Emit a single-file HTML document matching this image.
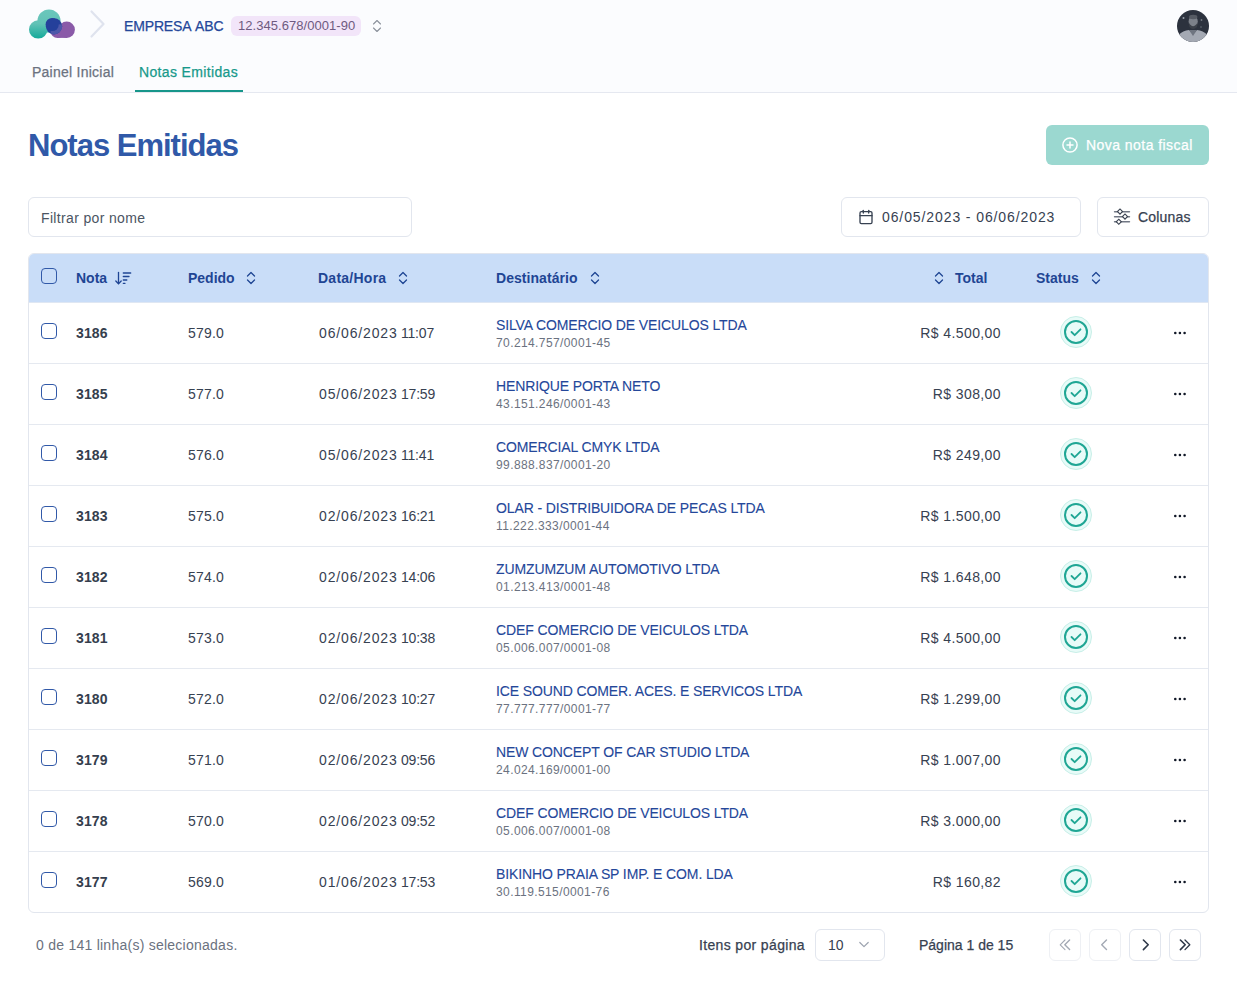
<!DOCTYPE html>
<html><head><meta charset="utf-8">
<style>
*{box-sizing:border-box;margin:0;padding:0}
html,body{width:1237px;height:985px;overflow:hidden;background:#fff;font-family:"Liberation Sans",sans-serif;color:#374151}
.a{position:absolute;white-space:nowrap}
#hdr{position:absolute;left:0;top:0;width:1237px;height:93px;background:#fbfcfe;border-bottom:1px solid #e5e8f0}
svg{position:absolute;overflow:visible}
.btn{position:absolute;border:1px solid #e2e6ee;border-radius:6px;background:#fff}
#tbl{position:absolute;left:28px;top:253px;width:1181px;height:660px;border:1px solid #e2e6ee;border-radius:6px;overflow:hidden}
#th{position:absolute;left:0;top:0;width:1179px;height:49px;background:#c9ddf8;border-bottom:1px solid #dfe7f3}
.row{position:absolute;left:0;width:1179px;height:61px;border-bottom:1px solid #e5e9f0}
</style></head><body>
<div id="hdr"></div>
<svg style="left:0;top:0" width="100" height="50">
<defs>
<linearGradient id="tg" gradientUnits="userSpaceOnUse" x1="0" y1="12" x2="0" y2="38"><stop offset="0" stop-color="#69c6bb"/><stop offset="0.45" stop-color="#62c2b6"/><stop offset="1" stop-color="#17ab9b"/></linearGradient>
<clipPath id="navyc"><circle cx="54" cy="26.3" r="8.1"/></clipPath>
</defs>
<g fill="url(#tg)"><circle cx="49" cy="21" r="11.5"/><circle cx="38.2" cy="29.4" r="9.2"/></g>
<g fill="#8a5aa8"><circle cx="66.7" cy="29.8" r="8.2"/><circle cx="57.5" cy="31" r="7"/><rect x="57" y="30" width="10" height="7.9"/></g>
<circle cx="54" cy="26.3" r="8.1" fill="#25409b"/>
<g clip-path="url(#navyc)" fill="#4d58aa"><circle cx="66.7" cy="29.8" r="8.2"/><circle cx="57.5" cy="31" r="7"/></g>
<circle cx="54" cy="26.3" r="6.6" fill="#25409b" transform="translate(-1.8,-1.8)"/>
</svg>
<svg style="left:0;top:0" width="120" height="50"><polyline points="91.5,11.5 103.5,24 91.5,36.5" fill="none" stroke="#dfe3ee" stroke-width="2.2" stroke-linecap="round" stroke-linejoin="round"/></svg>
<div class="a" style="left:124px;top:19px;font-size:14px;line-height:14px;font-weight:400;color:#24479a;letter-spacing:-0.15px;-webkit-text-stroke:0.25px currentColor;word-spacing:1.5px;">EMPRESA ABC</div>
<div class="a" style="left:231px;top:16px;width:130px;height:20px;border-radius:6px;background:#f2e5f9"></div>
<div class="a" style="left:238px;top:19px;font-size:13px;line-height:13px;font-weight:400;color:#6e5a80;letter-spacing:0.05px;">12.345.678/0001-90</div>
<svg style="left:0;top:0" width="1237" height="985"><g fill="none" stroke="#8b919c" stroke-width="1.1" stroke-linecap="round" stroke-linejoin="round"><polyline points="373.5,24 377,20.5 380.5,24"/><polyline points="373.5,28 377,31.5 380.5,28"/></g></svg>
<svg style="left:1177px;top:10px" width="32" height="32"><defs><clipPath id="av"><circle cx="16" cy="16" r="16"/></clipPath></defs>
<g clip-path="url(#av)"><rect width="32" height="32" fill="#2c323e"/>
<path d="M0 32 L1.5 25 Q6 20.5 12 20 L16 24 L20 20 Q26 20.5 30.5 25 L32 32 Z" fill="#a4a9b3"/>
<path d="M12 20 L16 26 L20 20 Z" fill="#6f7580"/>
<ellipse cx="16.2" cy="11.5" rx="4.6" ry="5.6" fill="#7b8089"/>
<path d="M11.8 12.5 Q16 20 20.6 12.5 L20 17 Q16 21 12.4 17 Z" fill="#3b4049"/>
<ellipse cx="16.2" cy="7" rx="4.2" ry="2.2" fill="#565b64"/>
<circle cx="6.5" cy="8" r="1" fill="#9aa0aa"/><circle cx="24.5" cy="10" r="0.9" fill="#747a84"/><circle cx="24" cy="17" r="0.8" fill="#6a707a"/>
</g></svg>
<div class="a" style="left:32px;top:65px;font-size:14px;line-height:14px;font-weight:400;color:#6b7280;letter-spacing:0.25px;-webkit-text-stroke:0.25px currentColor;">Painel Inicial</div>
<div class="a" style="left:139px;top:65px;font-size:14px;line-height:14px;font-weight:400;color:#17998b;letter-spacing:0.35px;-webkit-text-stroke:0.25px currentColor;">Notas Emitidas</div>
<div class="a" style="left:135px;top:90px;width:108px;height:2px;background:#17968a"></div>
<div class="a" style="left:28px;top:130px;font-size:31px;line-height:31px;font-weight:700;color:#3059a8;letter-spacing:-1px;">Notas Emitidas</div>
<div class="a" style="left:1046px;top:125px;width:163px;height:40px;border-radius:6px;background:#9bd8d0"></div>
<svg style="left:0;top:0" width="1237" height="300"><g fill="none" stroke="#fff" stroke-width="1.5" stroke-linecap="round"><circle cx="1070" cy="145" r="7.1"/><line x1="1070" y1="142" x2="1070" y2="148"/><line x1="1067" y1="145" x2="1073" y2="145"/></g></svg>
<div class="a" style="left:1086px;top:138px;font-size:14px;line-height:14px;font-weight:400;color:#ffffff;letter-spacing:0.45px;-webkit-text-stroke:0.25px currentColor;">Nova nota fiscal</div>
<div class="btn" style="left:28px;top:197px;width:384px;height:40px"></div>
<div class="a" style="left:41px;top:211px;font-size:14px;line-height:14px;font-weight:400;color:#4b5563;letter-spacing:0.35px;">Filtrar por nome</div>
<div class="btn" style="left:841px;top:197px;width:240px;height:40px"></div>
<svg style="left:858px;top:209px" width="16" height="16" viewBox="0 0 24 24"><g fill="none" stroke="#374151" stroke-width="2" stroke-linecap="round" stroke-linejoin="round"><rect x="3" y="4" width="18" height="18" rx="2"/><line x1="16" y1="2" x2="16" y2="6"/><line x1="8" y1="2" x2="8" y2="6"/><line x1="3" y1="10" x2="21" y2="10"/></g></svg>
<div class="a" style="left:882px;top:210px;font-size:14px;line-height:14px;font-weight:400;color:#374151;letter-spacing:0.9px;">06/05/2023 - 06/06/2023</div>
<div class="btn" style="left:1097px;top:197px;width:112px;height:40px"></div>
<svg style="left:0;top:0" width="1237" height="300"><g stroke="#717784" stroke-width="1.4" stroke-linecap="round"><line x1="1114.5" y1="211.8" x2="1129.5" y2="211.8"/><line x1="1114.5" y1="216.8" x2="1129.5" y2="216.8"/><line x1="1114.5" y1="221.8" x2="1129.5" y2="221.8"/></g><g fill="#fff" stroke="#3a4250" stroke-width="1.1"><rect x="-1.8" y="-1.8" width="3.6" height="3.6" transform="translate(1120,211.6) rotate(45)"/><rect x="-1.8" y="-1.8" width="3.6" height="3.6" transform="translate(1125,216.6) rotate(45)"/><rect x="-1.8" y="-1.8" width="3.6" height="3.6" transform="translate(1118.8,221.8) rotate(45)"/></g></svg>
<div class="a" style="left:1138px;top:210px;font-size:14px;line-height:14px;font-weight:400;color:#374151;letter-spacing:0.2px;-webkit-text-stroke:0.25px currentColor;">Colunas</div>
<div id="tbl"><div id="th"></div>
<div class="row" style="top:49px;"></div>
<div class="row" style="top:110px;"></div>
<div class="row" style="top:171px;"></div>
<div class="row" style="top:232px;"></div>
<div class="row" style="top:293px;"></div>
<div class="row" style="top:354px;"></div>
<div class="row" style="top:415px;"></div>
<div class="row" style="top:476px;"></div>
<div class="row" style="top:537px;"></div>
<div class="row" style="top:598px;border-bottom:none;"></div>
</div>
<div class="a" style="left:41px;top:268px;width:16px;height:16px;border:1.3px solid #3159a8;border-radius:4px"></div>
<div class="a" style="left:76px;top:271px;font-size:14px;line-height:14px;font-weight:700;color:#1f4594;">Nota</div>
<svg style="left:0;top:0" width="1237" height="400"><g fill="none" stroke="#1f4594" stroke-width="1.3" stroke-linecap="round" stroke-linejoin="round"><line x1="118.5" y1="272.5" x2="118.5" y2="283.5"/><polyline points="115.8,281 118.5,283.7 121.2,281"/><line x1="123.3" y1="273" x2="130.7" y2="273"/><line x1="123.3" y1="276.5" x2="129" y2="276.5"/><line x1="123.3" y1="280" x2="126.8" y2="280"/><line x1="123.3" y1="283.3" x2="125" y2="283.3"/></g></svg>
<div class="a" style="left:188px;top:271px;font-size:14px;line-height:14px;font-weight:700;color:#1f4594;">Pedido</div>
<svg style="left:0;top:0" width="1237" height="985"><g fill="none" stroke="#1f4594" stroke-width="1.3" stroke-linecap="round" stroke-linejoin="round"><polyline points="247.5,276 251,272.5 254.5,276"/><polyline points="247.5,280 251,283.5 254.5,280"/></g></svg>
<div class="a" style="left:318px;top:271px;font-size:14px;line-height:14px;font-weight:700;color:#1f4594;letter-spacing:0.25px;">Data/Hora</div>
<svg style="left:0;top:0" width="1237" height="985"><g fill="none" stroke="#1f4594" stroke-width="1.3" stroke-linecap="round" stroke-linejoin="round"><polyline points="399.5,276 403,272.5 406.5,276"/><polyline points="399.5,280 403,283.5 406.5,280"/></g></svg>
<div class="a" style="left:496px;top:271px;font-size:14px;line-height:14px;font-weight:700;color:#1f4594;letter-spacing:0.05px;">Destinatário</div>
<svg style="left:0;top:0" width="1237" height="985"><g fill="none" stroke="#1f4594" stroke-width="1.3" stroke-linecap="round" stroke-linejoin="round"><polyline points="591.5,276 595,272.5 598.5,276"/><polyline points="591.5,280 595,283.5 598.5,280"/></g></svg>
<svg style="left:0;top:0" width="1237" height="985"><g fill="none" stroke="#1f4594" stroke-width="1.3" stroke-linecap="round" stroke-linejoin="round"><polyline points="935.5,276 939,272.5 942.5,276"/><polyline points="935.5,280 939,283.5 942.5,280"/></g></svg>
<div class="a" style="left:955px;top:271px;font-size:14px;line-height:14px;font-weight:700;color:#1f4594;">Total</div>
<div class="a" style="left:1036px;top:271px;font-size:14px;line-height:14px;font-weight:700;color:#1f4594;">Status</div>
<svg style="left:0;top:0" width="1237" height="985"><g fill="none" stroke="#1f4594" stroke-width="1.3" stroke-linecap="round" stroke-linejoin="round"><polyline points="1092.5,276 1096,272.5 1099.5,276"/><polyline points="1092.5,280 1096,283.5 1099.5,280"/></g></svg>
<div class="a" style="left:41px;top:323px;width:16px;height:16px;border:1.3px solid #3159a8;border-radius:4px"></div>
<div class="a" style="left:76px;top:326px;font-size:14px;line-height:14px;font-weight:700;color:#353e4d;letter-spacing:0.15px;">3186</div>
<div class="a" style="left:188px;top:326px;font-size:14px;line-height:14px;font-weight:400;color:#374151;letter-spacing:0.2px;">579.0</div>
<div class="a" style="left:319px;top:326px;font-size:14px;line-height:14px;font-weight:400;color:#374151;word-spacing:-0.3px;"><span style="letter-spacing:0.85px">06/06/2023</span><span style="letter-spacing:-0.2px"> 11:07</span></div>
<div class="a" style="left:496px;top:318px;font-size:14px;line-height:14px;font-weight:400;color:#24479a;letter-spacing:-0.12px;-webkit-text-stroke:0.1px currentColor;">SILVA COMERCIO DE VEICULOS LTDA</div>
<div class="a" style="left:496px;top:337px;font-size:12px;line-height:12px;font-weight:400;color:#6b7280;letter-spacing:0.4px;">70.214.757/0001-45</div>
<div class="a" style="right:236px;top:326px;font-size:14px;line-height:14px;font-weight:400;color:#374151;letter-spacing:0.4px;">R$ 4.500,00</div>
<svg style="left:1060px;top:316px" width="32" height="32"><circle cx="16" cy="16" r="15.5" fill="#e8fbf8" stroke="#c8efe8" stroke-width="1"/><circle cx="16" cy="16" r="11" fill="none" stroke="#1fa694" stroke-width="2"/><polyline points="11.5,16 14.7,19.2 20.5,13.3" fill="none" stroke="#1fa694" stroke-width="1.8" stroke-linecap="round" stroke-linejoin="round"/></svg>
<svg style="left:1170px;top:329px" width="20" height="12"><g fill="#111827"><circle cx="5.3" cy="4" r="1.3"/><circle cx="9.9" cy="4" r="1.3"/><circle cx="14.6" cy="4" r="1.3"/></g></svg>
<div class="a" style="left:41px;top:384px;width:16px;height:16px;border:1.3px solid #3159a8;border-radius:4px"></div>
<div class="a" style="left:76px;top:387px;font-size:14px;line-height:14px;font-weight:700;color:#353e4d;letter-spacing:0.15px;">3185</div>
<div class="a" style="left:188px;top:387px;font-size:14px;line-height:14px;font-weight:400;color:#374151;letter-spacing:0.2px;">577.0</div>
<div class="a" style="left:319px;top:387px;font-size:14px;line-height:14px;font-weight:400;color:#374151;word-spacing:-0.3px;"><span style="letter-spacing:0.85px">05/06/2023</span><span style="letter-spacing:-0.2px"> 17:59</span></div>
<div class="a" style="left:496px;top:379px;font-size:14px;line-height:14px;font-weight:400;color:#24479a;letter-spacing:-0.12px;-webkit-text-stroke:0.1px currentColor;">HENRIQUE PORTA NETO</div>
<div class="a" style="left:496px;top:398px;font-size:12px;line-height:12px;font-weight:400;color:#6b7280;letter-spacing:0.4px;">43.151.246/0001-43</div>
<div class="a" style="right:236px;top:387px;font-size:14px;line-height:14px;font-weight:400;color:#374151;letter-spacing:0.4px;">R$ 308,00</div>
<svg style="left:1060px;top:377px" width="32" height="32"><circle cx="16" cy="16" r="15.5" fill="#e8fbf8" stroke="#c8efe8" stroke-width="1"/><circle cx="16" cy="16" r="11" fill="none" stroke="#1fa694" stroke-width="2"/><polyline points="11.5,16 14.7,19.2 20.5,13.3" fill="none" stroke="#1fa694" stroke-width="1.8" stroke-linecap="round" stroke-linejoin="round"/></svg>
<svg style="left:1170px;top:390px" width="20" height="12"><g fill="#111827"><circle cx="5.3" cy="4" r="1.3"/><circle cx="9.9" cy="4" r="1.3"/><circle cx="14.6" cy="4" r="1.3"/></g></svg>
<div class="a" style="left:41px;top:445px;width:16px;height:16px;border:1.3px solid #3159a8;border-radius:4px"></div>
<div class="a" style="left:76px;top:448px;font-size:14px;line-height:14px;font-weight:700;color:#353e4d;letter-spacing:0.15px;">3184</div>
<div class="a" style="left:188px;top:448px;font-size:14px;line-height:14px;font-weight:400;color:#374151;letter-spacing:0.2px;">576.0</div>
<div class="a" style="left:319px;top:448px;font-size:14px;line-height:14px;font-weight:400;color:#374151;word-spacing:-0.3px;"><span style="letter-spacing:0.85px">05/06/2023</span><span style="letter-spacing:-0.2px"> 11:41</span></div>
<div class="a" style="left:496px;top:440px;font-size:14px;line-height:14px;font-weight:400;color:#24479a;letter-spacing:-0.12px;-webkit-text-stroke:0.1px currentColor;">COMERCIAL CMYK LTDA</div>
<div class="a" style="left:496px;top:459px;font-size:12px;line-height:12px;font-weight:400;color:#6b7280;letter-spacing:0.4px;">99.888.837/0001-20</div>
<div class="a" style="right:236px;top:448px;font-size:14px;line-height:14px;font-weight:400;color:#374151;letter-spacing:0.4px;">R$ 249,00</div>
<svg style="left:1060px;top:438px" width="32" height="32"><circle cx="16" cy="16" r="15.5" fill="#e8fbf8" stroke="#c8efe8" stroke-width="1"/><circle cx="16" cy="16" r="11" fill="none" stroke="#1fa694" stroke-width="2"/><polyline points="11.5,16 14.7,19.2 20.5,13.3" fill="none" stroke="#1fa694" stroke-width="1.8" stroke-linecap="round" stroke-linejoin="round"/></svg>
<svg style="left:1170px;top:451px" width="20" height="12"><g fill="#111827"><circle cx="5.3" cy="4" r="1.3"/><circle cx="9.9" cy="4" r="1.3"/><circle cx="14.6" cy="4" r="1.3"/></g></svg>
<div class="a" style="left:41px;top:506px;width:16px;height:16px;border:1.3px solid #3159a8;border-radius:4px"></div>
<div class="a" style="left:76px;top:509px;font-size:14px;line-height:14px;font-weight:700;color:#353e4d;letter-spacing:0.15px;">3183</div>
<div class="a" style="left:188px;top:509px;font-size:14px;line-height:14px;font-weight:400;color:#374151;letter-spacing:0.2px;">575.0</div>
<div class="a" style="left:319px;top:509px;font-size:14px;line-height:14px;font-weight:400;color:#374151;word-spacing:-0.3px;"><span style="letter-spacing:0.85px">02/06/2023</span><span style="letter-spacing:-0.2px"> 16:21</span></div>
<div class="a" style="left:496px;top:501px;font-size:14px;line-height:14px;font-weight:400;color:#24479a;letter-spacing:-0.12px;-webkit-text-stroke:0.1px currentColor;">OLAR - DISTRIBUIDORA DE PECAS LTDA</div>
<div class="a" style="left:496px;top:520px;font-size:12px;line-height:12px;font-weight:400;color:#6b7280;letter-spacing:0.4px;">11.222.333/0001-44</div>
<div class="a" style="right:236px;top:509px;font-size:14px;line-height:14px;font-weight:400;color:#374151;letter-spacing:0.4px;">R$ 1.500,00</div>
<svg style="left:1060px;top:499px" width="32" height="32"><circle cx="16" cy="16" r="15.5" fill="#e8fbf8" stroke="#c8efe8" stroke-width="1"/><circle cx="16" cy="16" r="11" fill="none" stroke="#1fa694" stroke-width="2"/><polyline points="11.5,16 14.7,19.2 20.5,13.3" fill="none" stroke="#1fa694" stroke-width="1.8" stroke-linecap="round" stroke-linejoin="round"/></svg>
<svg style="left:1170px;top:512px" width="20" height="12"><g fill="#111827"><circle cx="5.3" cy="4" r="1.3"/><circle cx="9.9" cy="4" r="1.3"/><circle cx="14.6" cy="4" r="1.3"/></g></svg>
<div class="a" style="left:41px;top:567px;width:16px;height:16px;border:1.3px solid #3159a8;border-radius:4px"></div>
<div class="a" style="left:76px;top:570px;font-size:14px;line-height:14px;font-weight:700;color:#353e4d;letter-spacing:0.15px;">3182</div>
<div class="a" style="left:188px;top:570px;font-size:14px;line-height:14px;font-weight:400;color:#374151;letter-spacing:0.2px;">574.0</div>
<div class="a" style="left:319px;top:570px;font-size:14px;line-height:14px;font-weight:400;color:#374151;word-spacing:-0.3px;"><span style="letter-spacing:0.85px">02/06/2023</span><span style="letter-spacing:-0.2px"> 14:06</span></div>
<div class="a" style="left:496px;top:562px;font-size:14px;line-height:14px;font-weight:400;color:#24479a;letter-spacing:-0.12px;-webkit-text-stroke:0.1px currentColor;">ZUMZUMZUM AUTOMOTIVO LTDA</div>
<div class="a" style="left:496px;top:581px;font-size:12px;line-height:12px;font-weight:400;color:#6b7280;letter-spacing:0.4px;">01.213.413/0001-48</div>
<div class="a" style="right:236px;top:570px;font-size:14px;line-height:14px;font-weight:400;color:#374151;letter-spacing:0.4px;">R$ 1.648,00</div>
<svg style="left:1060px;top:560px" width="32" height="32"><circle cx="16" cy="16" r="15.5" fill="#e8fbf8" stroke="#c8efe8" stroke-width="1"/><circle cx="16" cy="16" r="11" fill="none" stroke="#1fa694" stroke-width="2"/><polyline points="11.5,16 14.7,19.2 20.5,13.3" fill="none" stroke="#1fa694" stroke-width="1.8" stroke-linecap="round" stroke-linejoin="round"/></svg>
<svg style="left:1170px;top:573px" width="20" height="12"><g fill="#111827"><circle cx="5.3" cy="4" r="1.3"/><circle cx="9.9" cy="4" r="1.3"/><circle cx="14.6" cy="4" r="1.3"/></g></svg>
<div class="a" style="left:41px;top:628px;width:16px;height:16px;border:1.3px solid #3159a8;border-radius:4px"></div>
<div class="a" style="left:76px;top:631px;font-size:14px;line-height:14px;font-weight:700;color:#353e4d;letter-spacing:0.15px;">3181</div>
<div class="a" style="left:188px;top:631px;font-size:14px;line-height:14px;font-weight:400;color:#374151;letter-spacing:0.2px;">573.0</div>
<div class="a" style="left:319px;top:631px;font-size:14px;line-height:14px;font-weight:400;color:#374151;word-spacing:-0.3px;"><span style="letter-spacing:0.85px">02/06/2023</span><span style="letter-spacing:-0.2px"> 10:38</span></div>
<div class="a" style="left:496px;top:623px;font-size:14px;line-height:14px;font-weight:400;color:#24479a;letter-spacing:-0.12px;-webkit-text-stroke:0.1px currentColor;">CDEF COMERCIO DE VEICULOS LTDA</div>
<div class="a" style="left:496px;top:642px;font-size:12px;line-height:12px;font-weight:400;color:#6b7280;letter-spacing:0.4px;">05.006.007/0001-08</div>
<div class="a" style="right:236px;top:631px;font-size:14px;line-height:14px;font-weight:400;color:#374151;letter-spacing:0.4px;">R$ 4.500,00</div>
<svg style="left:1060px;top:621px" width="32" height="32"><circle cx="16" cy="16" r="15.5" fill="#e8fbf8" stroke="#c8efe8" stroke-width="1"/><circle cx="16" cy="16" r="11" fill="none" stroke="#1fa694" stroke-width="2"/><polyline points="11.5,16 14.7,19.2 20.5,13.3" fill="none" stroke="#1fa694" stroke-width="1.8" stroke-linecap="round" stroke-linejoin="round"/></svg>
<svg style="left:1170px;top:634px" width="20" height="12"><g fill="#111827"><circle cx="5.3" cy="4" r="1.3"/><circle cx="9.9" cy="4" r="1.3"/><circle cx="14.6" cy="4" r="1.3"/></g></svg>
<div class="a" style="left:41px;top:689px;width:16px;height:16px;border:1.3px solid #3159a8;border-radius:4px"></div>
<div class="a" style="left:76px;top:692px;font-size:14px;line-height:14px;font-weight:700;color:#353e4d;letter-spacing:0.15px;">3180</div>
<div class="a" style="left:188px;top:692px;font-size:14px;line-height:14px;font-weight:400;color:#374151;letter-spacing:0.2px;">572.0</div>
<div class="a" style="left:319px;top:692px;font-size:14px;line-height:14px;font-weight:400;color:#374151;word-spacing:-0.3px;"><span style="letter-spacing:0.85px">02/06/2023</span><span style="letter-spacing:-0.2px"> 10:27</span></div>
<div class="a" style="left:496px;top:684px;font-size:14px;line-height:14px;font-weight:400;color:#24479a;letter-spacing:-0.12px;-webkit-text-stroke:0.1px currentColor;">ICE SOUND COMER. ACES. E SERVICOS LTDA</div>
<div class="a" style="left:496px;top:703px;font-size:12px;line-height:12px;font-weight:400;color:#6b7280;letter-spacing:0.4px;">77.777.777/0001-77</div>
<div class="a" style="right:236px;top:692px;font-size:14px;line-height:14px;font-weight:400;color:#374151;letter-spacing:0.4px;">R$ 1.299,00</div>
<svg style="left:1060px;top:682px" width="32" height="32"><circle cx="16" cy="16" r="15.5" fill="#e8fbf8" stroke="#c8efe8" stroke-width="1"/><circle cx="16" cy="16" r="11" fill="none" stroke="#1fa694" stroke-width="2"/><polyline points="11.5,16 14.7,19.2 20.5,13.3" fill="none" stroke="#1fa694" stroke-width="1.8" stroke-linecap="round" stroke-linejoin="round"/></svg>
<svg style="left:1170px;top:695px" width="20" height="12"><g fill="#111827"><circle cx="5.3" cy="4" r="1.3"/><circle cx="9.9" cy="4" r="1.3"/><circle cx="14.6" cy="4" r="1.3"/></g></svg>
<div class="a" style="left:41px;top:750px;width:16px;height:16px;border:1.3px solid #3159a8;border-radius:4px"></div>
<div class="a" style="left:76px;top:753px;font-size:14px;line-height:14px;font-weight:700;color:#353e4d;letter-spacing:0.15px;">3179</div>
<div class="a" style="left:188px;top:753px;font-size:14px;line-height:14px;font-weight:400;color:#374151;letter-spacing:0.2px;">571.0</div>
<div class="a" style="left:319px;top:753px;font-size:14px;line-height:14px;font-weight:400;color:#374151;word-spacing:-0.3px;"><span style="letter-spacing:0.85px">02/06/2023</span><span style="letter-spacing:-0.2px"> 09:56</span></div>
<div class="a" style="left:496px;top:745px;font-size:14px;line-height:14px;font-weight:400;color:#24479a;letter-spacing:-0.12px;-webkit-text-stroke:0.1px currentColor;">NEW CONCEPT OF CAR STUDIO LTDA</div>
<div class="a" style="left:496px;top:764px;font-size:12px;line-height:12px;font-weight:400;color:#6b7280;letter-spacing:0.4px;">24.024.169/0001-00</div>
<div class="a" style="right:236px;top:753px;font-size:14px;line-height:14px;font-weight:400;color:#374151;letter-spacing:0.4px;">R$ 1.007,00</div>
<svg style="left:1060px;top:743px" width="32" height="32"><circle cx="16" cy="16" r="15.5" fill="#e8fbf8" stroke="#c8efe8" stroke-width="1"/><circle cx="16" cy="16" r="11" fill="none" stroke="#1fa694" stroke-width="2"/><polyline points="11.5,16 14.7,19.2 20.5,13.3" fill="none" stroke="#1fa694" stroke-width="1.8" stroke-linecap="round" stroke-linejoin="round"/></svg>
<svg style="left:1170px;top:756px" width="20" height="12"><g fill="#111827"><circle cx="5.3" cy="4" r="1.3"/><circle cx="9.9" cy="4" r="1.3"/><circle cx="14.6" cy="4" r="1.3"/></g></svg>
<div class="a" style="left:41px;top:811px;width:16px;height:16px;border:1.3px solid #3159a8;border-radius:4px"></div>
<div class="a" style="left:76px;top:814px;font-size:14px;line-height:14px;font-weight:700;color:#353e4d;letter-spacing:0.15px;">3178</div>
<div class="a" style="left:188px;top:814px;font-size:14px;line-height:14px;font-weight:400;color:#374151;letter-spacing:0.2px;">570.0</div>
<div class="a" style="left:319px;top:814px;font-size:14px;line-height:14px;font-weight:400;color:#374151;word-spacing:-0.3px;"><span style="letter-spacing:0.85px">02/06/2023</span><span style="letter-spacing:-0.2px"> 09:52</span></div>
<div class="a" style="left:496px;top:806px;font-size:14px;line-height:14px;font-weight:400;color:#24479a;letter-spacing:-0.12px;-webkit-text-stroke:0.1px currentColor;">CDEF COMERCIO DE VEICULOS LTDA</div>
<div class="a" style="left:496px;top:825px;font-size:12px;line-height:12px;font-weight:400;color:#6b7280;letter-spacing:0.4px;">05.006.007/0001-08</div>
<div class="a" style="right:236px;top:814px;font-size:14px;line-height:14px;font-weight:400;color:#374151;letter-spacing:0.4px;">R$ 3.000,00</div>
<svg style="left:1060px;top:804px" width="32" height="32"><circle cx="16" cy="16" r="15.5" fill="#e8fbf8" stroke="#c8efe8" stroke-width="1"/><circle cx="16" cy="16" r="11" fill="none" stroke="#1fa694" stroke-width="2"/><polyline points="11.5,16 14.7,19.2 20.5,13.3" fill="none" stroke="#1fa694" stroke-width="1.8" stroke-linecap="round" stroke-linejoin="round"/></svg>
<svg style="left:1170px;top:817px" width="20" height="12"><g fill="#111827"><circle cx="5.3" cy="4" r="1.3"/><circle cx="9.9" cy="4" r="1.3"/><circle cx="14.6" cy="4" r="1.3"/></g></svg>
<div class="a" style="left:41px;top:872px;width:16px;height:16px;border:1.3px solid #3159a8;border-radius:4px"></div>
<div class="a" style="left:76px;top:875px;font-size:14px;line-height:14px;font-weight:700;color:#353e4d;letter-spacing:0.15px;">3177</div>
<div class="a" style="left:188px;top:875px;font-size:14px;line-height:14px;font-weight:400;color:#374151;letter-spacing:0.2px;">569.0</div>
<div class="a" style="left:319px;top:875px;font-size:14px;line-height:14px;font-weight:400;color:#374151;word-spacing:-0.3px;"><span style="letter-spacing:0.85px">01/06/2023</span><span style="letter-spacing:-0.2px"> 17:53</span></div>
<div class="a" style="left:496px;top:867px;font-size:14px;line-height:14px;font-weight:400;color:#24479a;letter-spacing:-0.12px;-webkit-text-stroke:0.1px currentColor;">BIKINHO PRAIA SP IMP. E COM. LDA</div>
<div class="a" style="left:496px;top:886px;font-size:12px;line-height:12px;font-weight:400;color:#6b7280;letter-spacing:0.4px;">30.119.515/0001-76</div>
<div class="a" style="right:236px;top:875px;font-size:14px;line-height:14px;font-weight:400;color:#374151;letter-spacing:0.4px;">R$ 160,82</div>
<svg style="left:1060px;top:865px" width="32" height="32"><circle cx="16" cy="16" r="15.5" fill="#e8fbf8" stroke="#c8efe8" stroke-width="1"/><circle cx="16" cy="16" r="11" fill="none" stroke="#1fa694" stroke-width="2"/><polyline points="11.5,16 14.7,19.2 20.5,13.3" fill="none" stroke="#1fa694" stroke-width="1.8" stroke-linecap="round" stroke-linejoin="round"/></svg>
<svg style="left:1170px;top:878px" width="20" height="12"><g fill="#111827"><circle cx="5.3" cy="4" r="1.3"/><circle cx="9.9" cy="4" r="1.3"/><circle cx="14.6" cy="4" r="1.3"/></g></svg>
<div class="a" style="left:36px;top:938px;font-size:14px;line-height:14px;font-weight:400;color:#6b7280;letter-spacing:0.25px;">0 de 141 linha(s) selecionadas.</div>
<div class="a" style="left:699px;top:938px;font-size:14px;line-height:14px;font-weight:400;color:#374151;letter-spacing:0.35px;-webkit-text-stroke:0.25px currentColor;">Itens por página</div>
<div class="btn" style="left:815px;top:929px;width:70px;height:32px"></div>
<div class="a" style="left:828px;top:938px;font-size:14px;line-height:14px;font-weight:400;color:#374151;">10</div>
<svg style="left:0;top:900px" width="1237" height="85"><polyline points="859.8,42.5 864,46.7 868.2,42.5" fill="none" stroke="#9ca3af" stroke-width="1.2" stroke-linecap="round" stroke-linejoin="round"/></svg>
<div class="a" style="left:919px;top:938px;font-size:14px;line-height:14px;font-weight:400;color:#374151;-webkit-text-stroke:0.25px currentColor;">Página 1 de 15</div>
<div class="a" style="left:1049px;top:929px;width:32px;height:32px;border:1px solid #eef0f4;border-radius:6px;background:#fff"></div>
<div class="a" style="left:1089px;top:929px;width:32px;height:32px;border:1px solid #eef0f4;border-radius:6px;background:#fff"></div>
<div class="a" style="left:1129px;top:929px;width:32px;height:32px;border:1px solid #e2e6ee;border-radius:6px;background:#fff"></div>
<div class="a" style="left:1169px;top:929px;width:32px;height:32px;border:1px solid #e2e6ee;border-radius:6px;background:#fff"></div>
<svg style="left:0;top:900px" width="1237" height="85"><g fill="none" stroke-width="1.4" stroke-linecap="round" stroke-linejoin="round">
<polyline points="1065,40 1060.2,44.8 1065,49.6" stroke="#a3a9b4" stroke-width="1.1"/><polyline points="1069.6,40 1064.8,44.8 1069.6,49.6" stroke="#a3a9b4"/>
<polyline points="1106.5,40 1101.7,44.8 1106.5,49.6" stroke="#a3a9b4"/>
<polyline points="1143.4,40 1148.2,44.8 1143.4,49.6" stroke="#2d3748" stroke-width="1.6"/>
<polyline points="1180.4,40 1185.2,44.8 1180.4,49.6" stroke="#2d3748" stroke-width="1.6"/><polyline points="1185,40 1189.8,44.8 1185,49.6" stroke="#2d3748" stroke-width="1.3"/>
</g></svg>
</body></html>
